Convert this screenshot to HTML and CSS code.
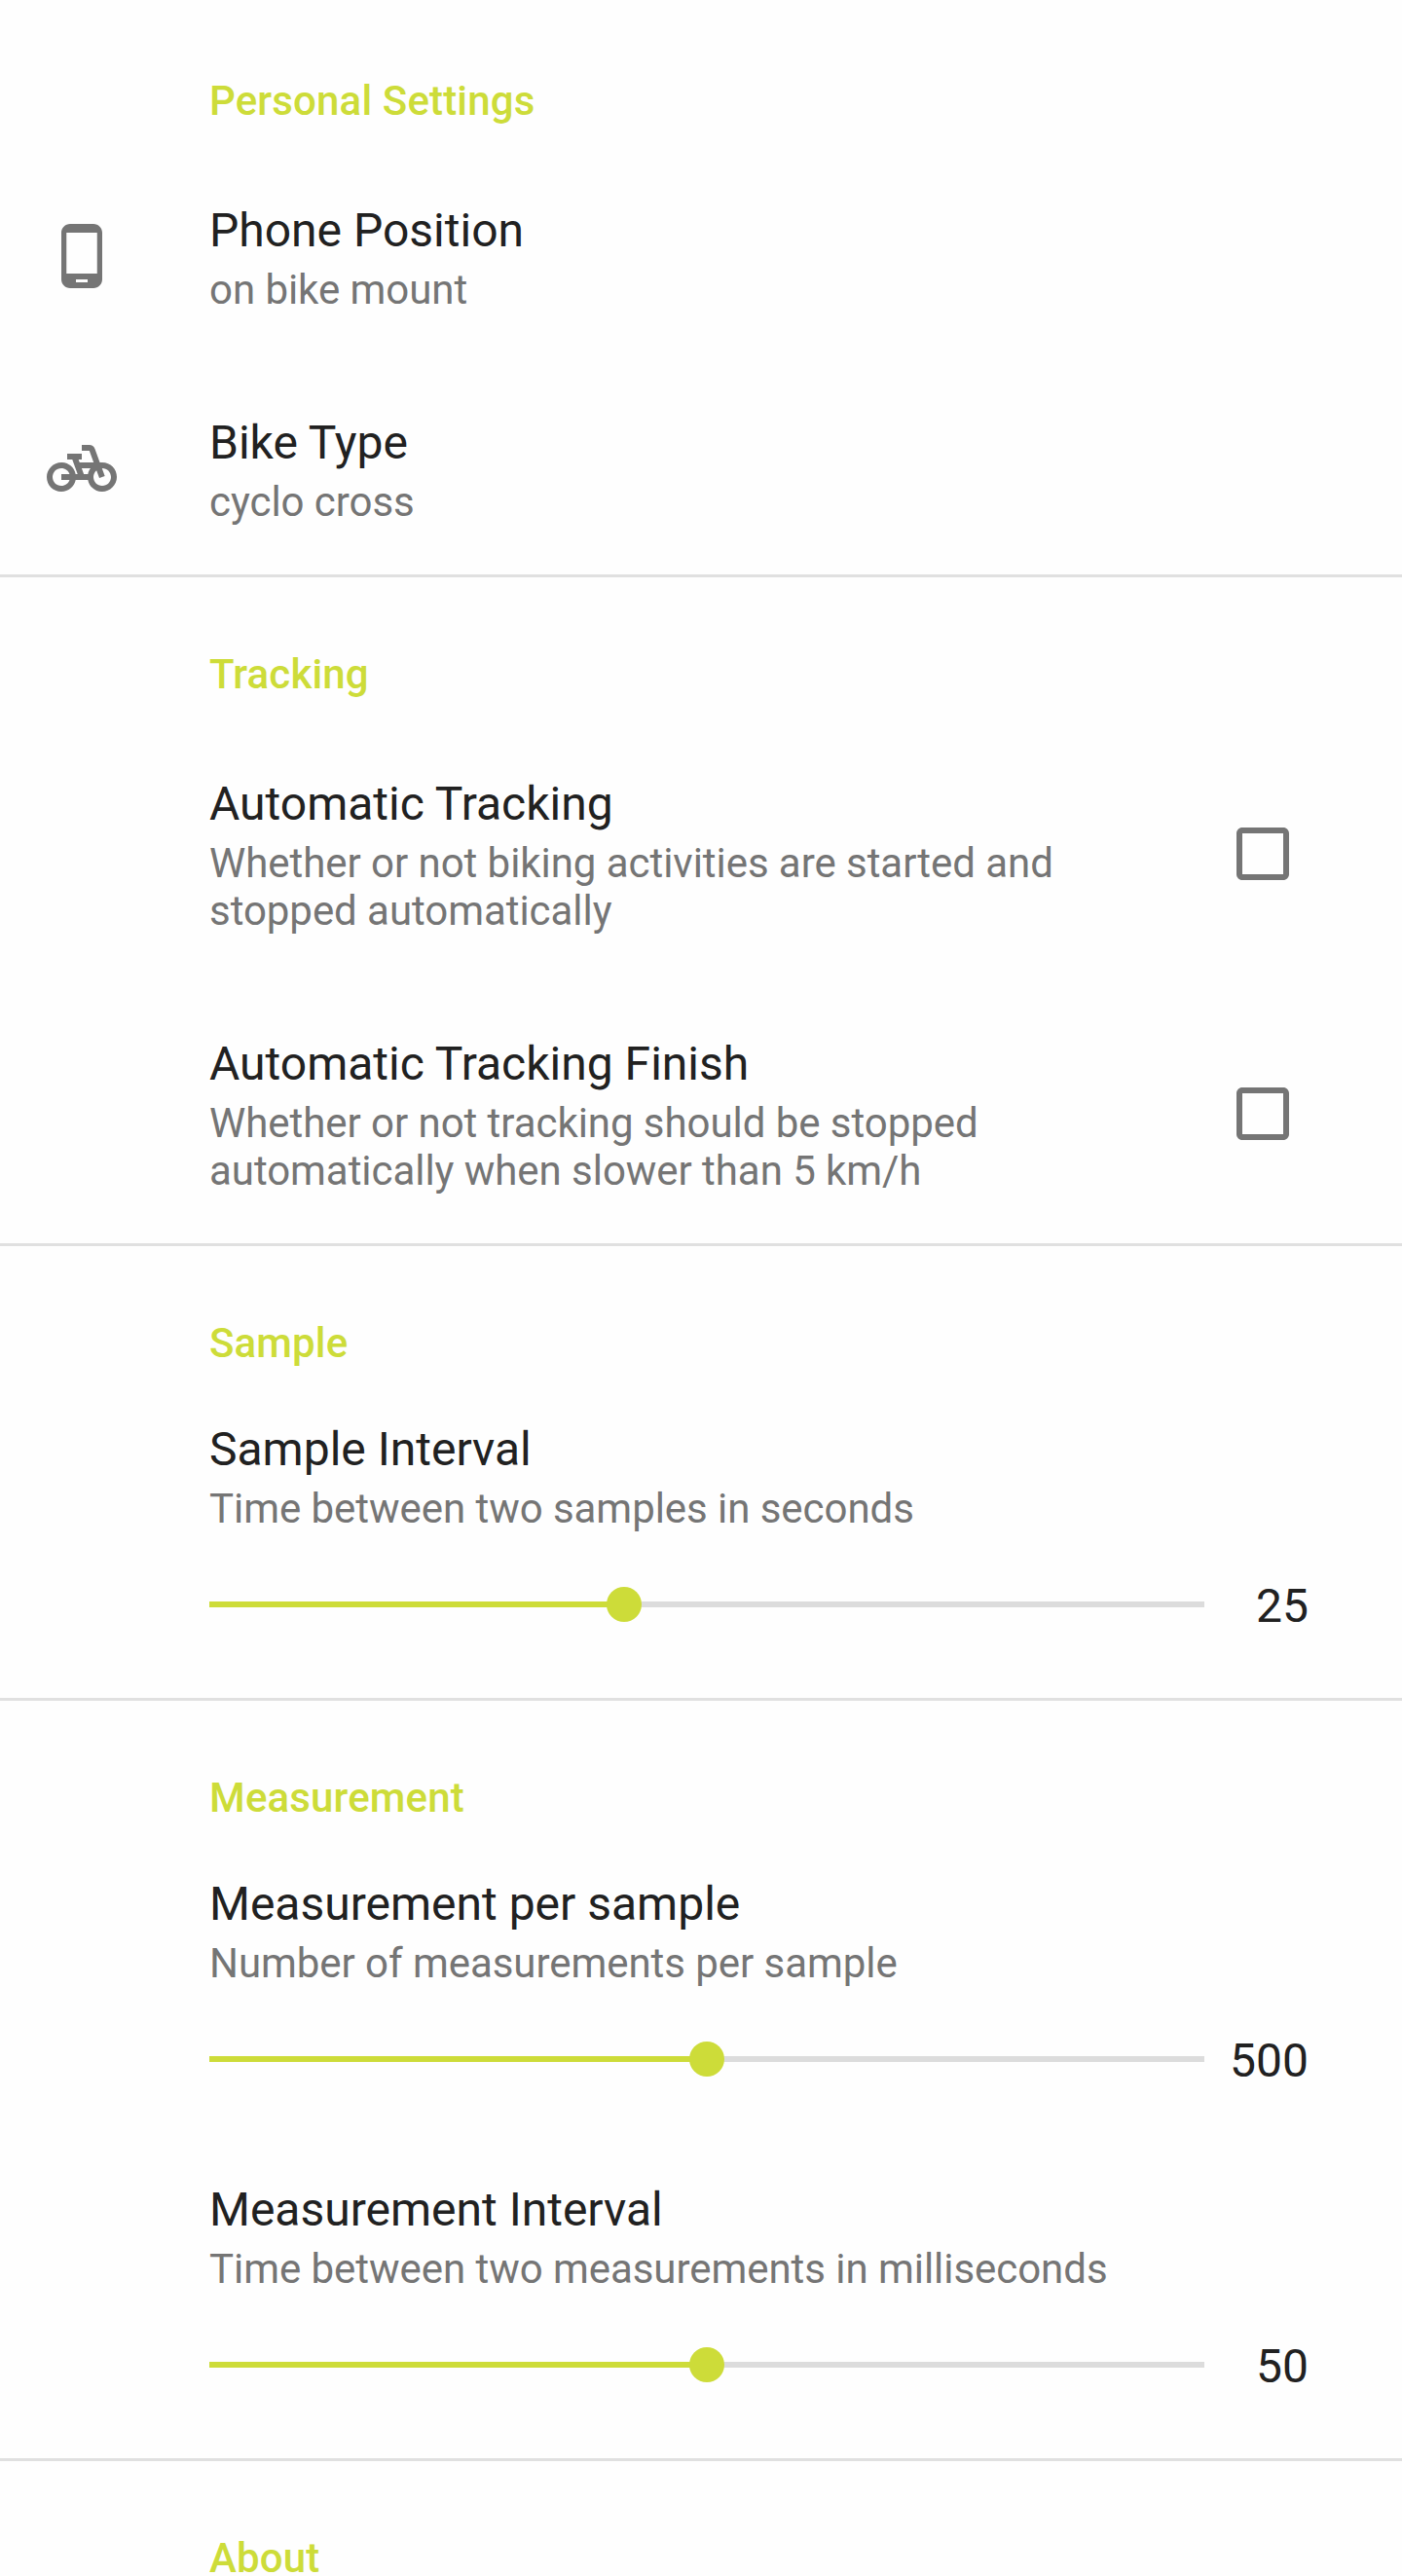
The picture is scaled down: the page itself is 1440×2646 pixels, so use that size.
FILE: index.html
```html
<!DOCTYPE html>
<html lang="en">
<head>
<meta charset="utf-8">
<title>Settings</title>
<link rel="stylesheet" href="styles.css">
</head>
<body>
<main class="settings">
  <section class="group">
    <h2 class="group-title">Personal Settings</h2>
    <div class="row">
      <svg class="icon" viewBox="0 0 24 24"><path d="M16 1H8C6.34 1 5 2.34 5 4v16c0 1.66 1.34 3 3 3h8c1.66 0 3-1.34 3-3V4c0-1.66-1.34-3-3-3zm-2 20h-4v-1h4v1zm3.25-3H6.75V4h10.5v14z"/></svg>
      <div class="text">
        <div class="title">Phone Position</div>
        <div class="summary">on bike mount</div>
      </div>
    </div>
    <div class="row">
      <svg class="icon" viewBox="0 0 24 24"><path d="M18.18,10l-1.7-4.68C16.19,4.53,15.44,4,14.6,4H12v2h2.6l1.46,4h-4.81l-0.36-1H12V7H7v2h1.75l1.82,5H9.9c-0.44-2.23-2.31-3.88-4.65-3.99C2.45,9.87,0,12.2,0,15c0,2.8,2.2,5,5,5c2.46,0,4.45-1.69,4.9-4h4.2c0.44,2.23,2.31,3.88,4.65,3.99c2.8,0.13,5.25-2.19,5.25-5c0-2.8-2.2-5-5-5H18.18z M7.82,16c-0.4,1.17-1.49,2-2.82,2c-1.68,0-3-1.32-3-3s1.32-3,3-3c1.33,0,2.42,0.83,2.82,2H5v2H7.82z M14.1,14h-1.4l-0.73-2H15C14.56,12.58,14.24,13.25,14.1,14z M19,18c-1.68,0-3-1.32-3-3c0-0.93,0.41-1.73,1.05-2.28l0.96,2.64l1.88-0.68l-0.97-2.67c0.03,0,0.06-0.01,0.08-0.01c1.68,0,3,1.32,3,3S20.68,18,19,18z"/></svg>
      <div class="text">
        <div class="title">Bike Type</div>
        <div class="summary">cyclo cross</div>
      </div>
    </div>
  </section>

  <section class="group">
    <h2 class="group-title">Tracking</h2>
    <div class="row">
      <div class="text">
        <div class="title">Automatic Tracking</div>
        <div class="summary">Whether or not biking activities are started and<br>stopped automatically</div>
      </div>
      <svg class="checkbox" viewBox="0 0 24 24"><path d="M19 5v14H5V5h14m0-2H5c-1.1 0-2 .9-2 2v14c0 1.1.9 2 2 2h14c1.1 0 2-.9 2-2V5c0-1.1-.9-2-2-2z"/></svg>
    </div>
    <div class="row">
      <div class="text">
        <div class="title">Automatic Tracking Finish</div>
        <div class="summary">Whether or not tracking should be stopped<br>automatically when slower than 5 km/h</div>
      </div>
      <svg class="checkbox" viewBox="0 0 24 24"><path d="M19 5v14H5V5h14m0-2H5c-1.1 0-2 .9-2 2v14c0 1.1.9 2 2 2h14c1.1 0 2-.9 2-2V5c0-1.1-.9-2-2-2z"/></svg>
    </div>
  </section>

  <section class="group">
    <h2 class="group-title">Sample</h2>
    <div class="slider-row">
      <div class="title">Sample Interval</div>
      <div class="summary">Time between two samples in seconds</div>
      <div class="control">
        <div class="slider"><div class="fill" style="width: 41.68%"></div><div class="thumb"></div><div class="rest"></div></div>
        <div class="value">25</div>
      </div>
    </div>
  </section>

  <section class="group">
    <h2 class="group-title">Measurement</h2>
    <div class="slider-row">
      <div class="title">Measurement per sample</div>
      <div class="summary">Number of measurements per sample</div>
      <div class="control">
        <div class="slider"><div class="fill" style="width: 50%"></div><div class="thumb"></div><div class="rest"></div></div>
        <div class="value">500</div>
      </div>
    </div>
    <div class="slider-row">
      <div class="title">Measurement Interval</div>
      <div class="summary">Time between two measurements in milliseconds</div>
      <div class="control">
        <div class="slider"><div class="fill" style="width: 50%"></div><div class="thumb"></div><div class="rest"></div></div>
        <div class="value">50</div>
      </div>
    </div>
  </section>

  <section class="group">
    <h2 class="group-title last">About</h2>
  </section>
</main>
</body>
</html>
```
FILE: styles.css
```css
* {
  box-sizing: border-box;
}

body {
  margin: 0;
  background: #fefefe;
  color: #212121;
  font-family: Roboto, sans-serif;
}

.settings {
  padding-top: 1px;
}

.group {
  border-top: 3px solid #e0e0e0;
}

.group:first-child {
  border-top-color: transparent;
}

.group-title {
  margin: 0;
  padding: 75px 48px 26px 215px;
  color: #cddc39;
  font-size: 42px;
  font-weight: 500;
  line-height: 49px;
  letter-spacing: 0.15px;
}

.group-title.last {
  height: 118px;
  padding-top: 78px;
  padding-bottom: 0;
  line-height: 43px;
}

.row {
  display: flex;
  align-items: center;
  padding: 0 96px 0 48px;
}

.icon {
  width: 72px;
  height: 72px;
  fill: #757575;
}

.text {
  flex: 1;
  padding: 55px 0 50px 167px;
}

.icon + .text {
  padding-left: 95px;
}

.title {
  font-size: 48px;
  line-height: 56px;
}

.summary {
  margin-top: 8px;
  color: #757575;
  font-size: 42px;
  line-height: 49px;
  letter-spacing: -0.05px;
}

.checkbox {
  width: 72px;
  height: 72px;
  margin-right: 11px;
  fill: #757575;
}

.slider-row {
  padding: 31px 96px 66px 215px;
}

.control {
  display: flex;
  align-items: center;
  margin-top: 48px;
}

.slider {
  display: flex;
  align-items: center;
  width: 1022px;
  height: 36px;
  margin-bottom: 4px;
}

.fill {
  height: 6px;
  background: #cddc39;
}

.thumb {
  flex: none;
  width: 36px;
  height: 36px;
  margin: 0 -18px;
  border-radius: 50%;
  background: #cddc39;
  z-index: 1;
}

.rest {
  flex: 1;
  height: 6px;
  background: #dcdcdc;
}

.value {
  flex: 1;
  font-size: 48px;
  line-height: 56px;
  text-align: right;
}
```
